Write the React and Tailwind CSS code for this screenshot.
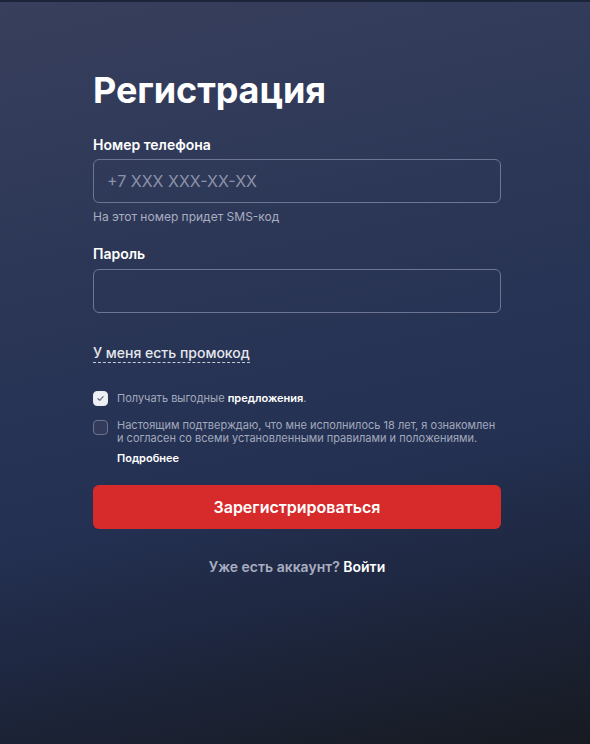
import React from "react";

function Checkbox({ checked }) {
    return (
        <span
            className={
                "mt-px flex h-[15px] w-[15px] shrink-0 items-center justify-center rounded-[4px] border " +
                (checked ? "border-[#e8eaf0] bg-[#eef0f4]" : "border-[#6a7290] bg-[#323c5a]")
            }
        >
            {checked && (
                <svg width="9" height="9" viewBox="0 0 10 10" fill="none">
                    <path d="M2.2 5.2 4.2 7.1 7.9 2.9" stroke="#6b7082" strokeWidth="1.4" strokeLinecap="round" strokeLinejoin="round" />
                </svg>
            )}
        </span>
    );
}

export default function App() {
    return (
        <div
            className="min-h-[744px] w-full border-t-2 border-[#1b2438] bg-[linear-gradient(168deg,#383f5d_0%,#2b3656_35%,#243153_62%,#1e2740_78%,#171a21_100%)] font-['Inter',sans-serif] text-white"
        >
            <div className="ml-[93px] w-[408px] pt-[64px]">
                <h1 className="text-[36px] font-bold leading-[48px] tracking-[-0.1px]">Регистрация</h1>

                <label className="mt-[21px] block text-[14px] font-semibold leading-[20px]">Номер телефона</label>
                <div className="mt-[4px] flex h-[44px] items-center rounded-[6px] border border-[#6d7593] px-[13px]">
                    <span className="text-[16px] text-[#8b92a8]">+7 XXX XXX-XX-XX</span>
                </div>
                <p className="mt-[6px] text-[12px] leading-[16px] text-[#a9aec0]">На этот номер придет SMS-код</p>

                <label className="mt-[19px] block text-[14px] font-semibold leading-[20px]">Пароль</label>
                <div className="mt-[5px] h-[44px] rounded-[6px] border border-[#6d7593]"></div>

                <div className="mt-[27px]">
                    <span className="border-b border-dashed border-[#c9cdd8] pb-[1px] text-[14px] font-medium leading-[20px] text-[#e6e8ee]">
                        У меня есть промокод
                    </span>
                </div>

                <div className="mt-[26px] flex items-start gap-[9px]">
                    <Checkbox checked />
                    <p className="text-[11px] leading-[16px] text-[#a3a9bc]">
                        Получать выгодные <span className="font-semibold text-white">предложения</span>.
                    </p>
                </div>
                <div className="mt-[13px] flex items-start gap-[9px]">
                    <Checkbox />
                    <div>
                        <p className="text-[11px] leading-[13px] text-[#a3a9bc]">
                            Настоящим подтверждаю, что мне исполнилось 18 лет, я ознакомлен и согласен со всеми установленными правилами и положениями.
                        </p>
                        <p className="mt-[7px] text-[11px] font-semibold leading-[13px] text-white">Подробнее</p>
                    </div>
                </div>

                <button className="mt-[20px] flex h-[44px] w-full items-center justify-center rounded-[6px] bg-[#d72a2a] text-[16px] font-semibold text-white">
                    Зарегистрироваться
                </button>

                <p className="mt-[27px] text-center text-[14px] font-semibold text-[#a9aec0]">
                    Уже есть аккаунт? <span className="text-white">Войти</span>
                </p>
            </div>
        </div>
    );
}
